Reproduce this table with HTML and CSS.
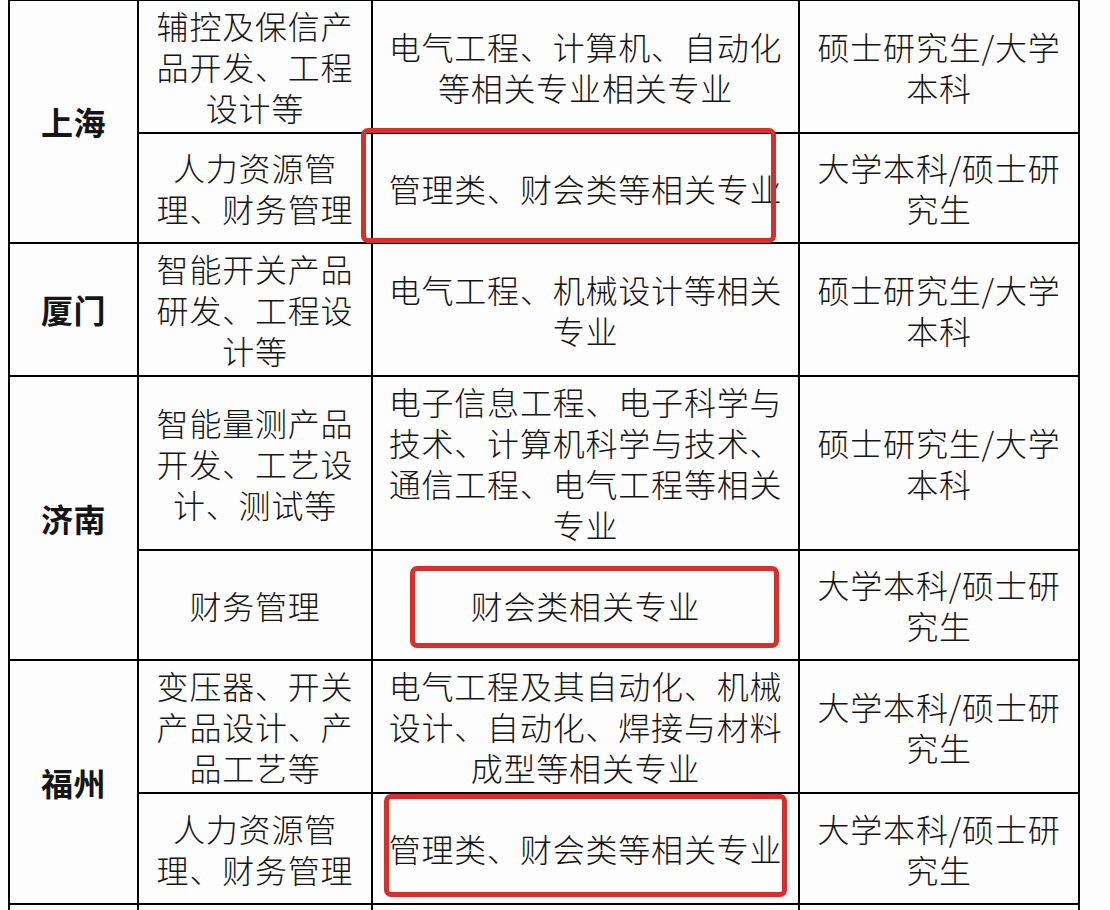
FILE: index.html
```html
<!DOCTYPE html>
<html lang="zh-CN">
<head>
<meta charset="utf-8">
<title>招聘专业要求</title>
<link rel="stylesheet" href="styles.css">
</head>
<body>
<div class="sheet">
  <table class="grid">
    <colgroup>
      <col class="c-city">
      <col class="c-post">
      <col class="c-major">
      <col class="c-degree">
    </colgroup>
    <tbody>
      <tr class="h133">
        <td class="city" rowspan="2">上海</td>
        <td>辅控及保信产品开发、工程设计等</td>
        <td>电气工程、计算机、自动化等相关专业相关专业</td>
        <td>硕士研究生/大学本科</td>
      </tr>
      <tr class="h110">
        <td>人力资源管理、财务管理</td>
        <td>管理类、财会类等相关专业</td>
        <td>大学本科/硕士研究生</td>
      </tr>
      <tr class="h133">
        <td class="city">厦门</td>
        <td>智能开关产品研发、工程设计等</td>
        <td>电气工程、机械设计等相关专业</td>
        <td>硕士研究生/大学本科</td>
      </tr>
      <tr class="h173">
        <td class="city" rowspan="2">济南</td>
        <td>智能量测产品开发、工艺设计、测试等</td>
        <td>电子信息工程、电子科学与技术、计算机科学与技术、通信工程、电气工程等相关专业</td>
        <td>硕士研究生/大学本科</td>
      </tr>
      <tr class="h110">
        <td>财务管理</td>
        <td>财会类相关专业</td>
        <td>大学本科/硕士研究生</td>
      </tr>
      <tr class="h133">
        <td class="city" rowspan="2">福州</td>
        <td>变压器、开关产品设计、产品工艺等</td>
        <td>电气工程及其自动化、机械设计、自动化、焊接与材料成型等相关专业</td>
        <td>大学本科/硕士研究生</td>
      </tr>
      <tr class="h111">
        <td>人力资源管理、财务管理</td>
        <td>管理类、财会类等相关专业</td>
        <td>大学本科/硕士研究生</td>
      </tr>
      <tr class="h100">
        <td class="city"></td>
        <td></td>
        <td></td>
        <td></td>
      </tr>
    </tbody>
  </table>
  <span class="mark mark-sh"></span>
  <span class="mark mark-jn"></span>
  <span class="mark mark-fz"></span>
</div>
</body>
</html>
```

FILE: styles.css
```css
html, body {
  margin: 0;
  padding: 0;
  background: #fefdfe;
}

body {
  height: 910px;
  overflow: hidden;
  font-family: "Noto Sans CJK SC", "Noto Sans", sans-serif;
  color: #151515;
}

.sheet {
  position: relative;
  width: 1070px;
  margin: -1px 0 0 8px;
}

.grid {
  width: 1070px;
  table-layout: fixed;
  border-collapse: collapse;
  border: 2px solid #000;
}

.c-city { width: 129px; }
.c-post { width: 234px; }
.c-major { width: 427px; }
.c-degree { width: 280px; }

.grid td {
  border: 2px solid #000;
  padding: 4px 8px;
  text-align: center;
  vertical-align: middle;
  font-size: 32px;
  font-weight: 300;
  line-height: 41px;
  letter-spacing: 0.8px;
}

.grid td.city {
  font-weight: 700;
  letter-spacing: 0.5px;
}

.h100 { height: 100px; }
.h110 { height: 110px; }
.h111 { height: 111px; }
.h133 { height: 133px; }
.h173 { height: 173px; }

.mark {
  position: absolute;
  box-sizing: border-box;
  border: 5px solid #d82f2a;
  border-radius: 7px;
}

.mark-sh { left: 353px; top: 129px; width: 415px; height: 115px; }
.mark-jn { left: 402px; top: 567px; width: 369px; height: 82px; }
.mark-fz { left: 376px; top: 795px; width: 403px; height: 103px; }
```
